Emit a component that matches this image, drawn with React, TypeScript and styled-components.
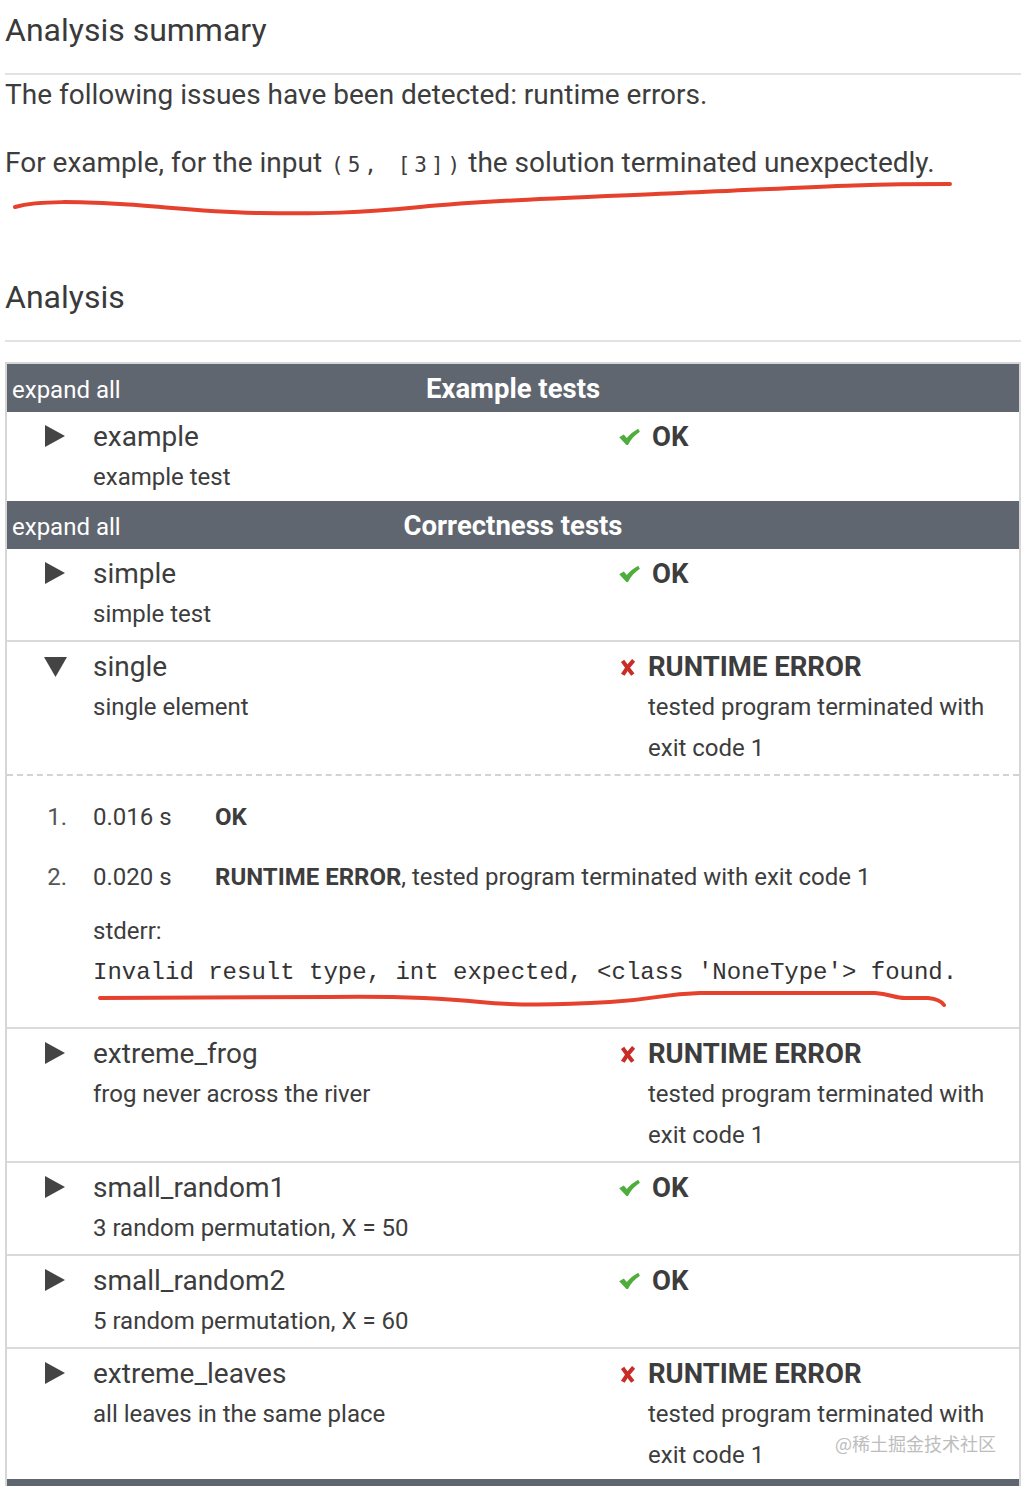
import React from 'react';
import styled, { createGlobalStyle } from 'styled-components';

const GlobalStyle = createGlobalStyle`
  body {
    margin: 0;
    background: #ffffff;
    color: #3d3d3d;
    font-family: Roboto, "Liberation Sans", sans-serif;
  }
`;

const Page = styled.div`
  position: relative;
  width: 1016px;
  padding: 0 7px 0 5px;
  height: 1486px;
  overflow: hidden;
`;

const Heading = styled.h2<{ top?: number }>`
  margin: 0;
  padding-top: ${({ top }) => top ?? 8}px;
  font-size: 32px;
  font-weight: 400;
  line-height: 44px;
  color: #3a3a3a;
`;

const Rule = styled.div<{ gap?: number }>`
  margin-top: ${({ gap }) => gap ?? 0}px;
  border-bottom: 2px solid #e2e2e2;
`;

const Para = styled.p<{ gap?: number }>`
  margin: ${({ gap }) => gap ?? 0}px 0 0;
  font-size: 28px;
  line-height: 40px;
`;

const Code = styled.code`
  font-family: "DejaVu Sans Mono", "Liberation Mono", monospace;
  font-size: 21px;
  letter-spacing: 4px;
  margin: 0 4px 0 9px;
`;

const Table = styled.div`
  margin-top: 20px;
  border: 2px solid #d6d6d6;
  border-bottom: none;
`;

const GroupHeader = styled.div`
  display: grid;
  grid-template-columns: 1fr auto 1fr;
  align-items: baseline;
  height: 48px;
  background: #5f666f;
  color: #ffffff;
`;

const ExpandAll = styled.span`
  padding-left: 5px;
  font-size: 24px;
  line-height: 52px;
`;

const GroupTitle = styled.span`
  font-size: 27.5px;
  font-weight: 700;
  line-height: 44px;
`;

const TestRow = styled.div<{ open?: boolean; last?: boolean }>`
  display: grid;
  grid-template-columns: 86px 524px 1fr;
  padding: 4px 0 ${({ last }) => (last ? 3 : 5)}px;
  border-bottom: ${({ open, last }) => (last ? 'none' : open ? '2px dashed #d3d3d3' : '2px solid #dadada')};
`;

const ToggleCell = styled.div`
  padding: 9px 0 0 37px;
`;

const NameCell = styled.div`
  display: flex;
  flex-direction: column;
`;

const Name = styled.span`
  font-size: 28px;
  line-height: 41px;
`;

const Desc = styled.span`
  font-size: 24px;
  line-height: 41px;
`;

const StatusCell = styled.div`
  display: flex;
  align-items: flex-start;
  padding-right: 8px;
`;

const StatusIcon = styled.span<{ ok?: boolean }>`
  flex: 0 0 ${({ ok }) => (ok ? 35 : 31)}px;
  padding: 13px 0 0 ${({ ok }) => (ok ? 2 : 3)}px;
  box-sizing: border-box;
  line-height: 0;
`;

const StatusText = styled.div`
  display: flex;
  flex-direction: column;
`;

const StatusTitle = styled.span`
  font-size: 27.5px;
  font-weight: 700;
  line-height: 41px;
`;

const StatusDetail = styled.span`
  font-size: 24px;
  line-height: 41px;
`;

const DetailPanel = styled.div`
  padding: 21px 0 34px;
  border-bottom: 2px solid #dadada;
`;

const RunLine = styled.div`
  display: grid;
  grid-template-columns: 86px 122px 1fr;
  font-size: 24px;
  line-height: 40px;
  margin-bottom: 20px;
`;

const RunNo = styled.span`
  text-align: right;
  padding-right: 26px;
  color: #555;
`;

const Strong = styled.b`
  font-weight: 700;
`;

const Stderr = styled.div`
  padding-left: 86px;
  margin-top: -6px;
  font-size: 24px;
  line-height: 41px;
`;

const Mono = styled.div`
  font-family: "Liberation Mono", "Courier New", monospace;
  font-size: 24px;
  line-height: 41px;
  color: #333;
`;

const Overlay = styled.svg`
  position: absolute;
  left: 0;
  top: 0;
  pointer-events: none;
`;

const Watermark = styled.span`
  position: absolute;
  left: 835px;
  top: 1430px;
  font-family: "Noto Sans CJK SC", sans-serif;
  font-size: 18px;
  color: #bdbdbd;
`;

type Test = {
  name: string;
  desc: string;
  ok: boolean;
  open?: boolean;
};

const groups: { title: string; tests: Test[] }[] = [
  { title: 'Example tests', tests: [{ name: 'example', desc: 'example test', ok: true }] },
  {
    title: 'Correctness tests',
    tests: [
      { name: 'simple', desc: 'simple test', ok: true },
      { name: 'single', desc: 'single element', ok: false, open: true },
      { name: 'extreme_frog', desc: 'frog never across the river', ok: false },
      { name: 'small_random1', desc: '3 random permutation, X = 50', ok: true },
      { name: 'small_random2', desc: '5 random permutation, X = 60', ok: true },
      { name: 'extreme_leaves', desc: 'all leaves in the same place', ok: false },
    ],
  },
  { title: 'Performance tests', tests: [] },
];

const Triangle = ({ open }: { open?: boolean }) =>
  open ? (
    <svg width="23" height="22" viewBox="0 0 23 22">
      <polygon points="0,2 23,2 11.5,22" fill="#444" />
    </svg>
  ) : (
    <svg width="22" height="22" viewBox="0 0 22 22">
      <polygon points="1,0 21,11 1,22" fill="#444" />
    </svg>
  );

const CheckIcon = () => (
  <svg width="21" height="16" viewBox="0 0 21 16">
    <path
      d="M0.2 8.2 L4.8 5.4 L7.8 9 C10.8 5.4, 14.6 2.2, 19.2 -0.2 L20.9 2.8 C15.8 6.2, 11.8 10.4, 9 16 L7.4 16 Z"
      fill="#4fae3b"
    />
  </svg>
);

const CrossIcon = () => (
  <svg width="16" height="17" viewBox="0 0 16 17">
    <path d="M2.6 1.8 C5.4 6, 9 10.6, 12.8 15.6" stroke="#c92d28" strokeWidth="4" fill="none" />
    <path d="M13.6 1.4 C9.6 5.6, 6 10.2, 2.8 15.8" stroke="#c92d28" strokeWidth="4.2" fill="none" />
  </svg>
);

const Row = ({ test, last }: { test: Test; last: boolean }) => (
  <>
    <TestRow open={test.open} last={last && !test.open}>
      <ToggleCell>
        <Triangle open={test.open} />
      </ToggleCell>
      <NameCell>
        <Name>{test.name}</Name>
        <Desc>{test.desc}</Desc>
      </NameCell>
      <StatusCell>
        <StatusIcon ok={test.ok}>{test.ok ? <CheckIcon /> : <CrossIcon />}</StatusIcon>
        <StatusText>
          <StatusTitle>{test.ok ? 'OK' : 'RUNTIME ERROR'}</StatusTitle>
          {!test.ok && <StatusDetail>tested program terminated with exit code 1</StatusDetail>}
        </StatusText>
      </StatusCell>
    </TestRow>
    {test.open && (
      <DetailPanel>
        <RunLine>
          <RunNo>1.</RunNo>
          <span>0.016 s</span>
          <Strong>OK</Strong>
        </RunLine>
        <RunLine>
          <RunNo>2.</RunNo>
          <span>0.020 s</span>
          <span>
            <Strong>RUNTIME ERROR</Strong>, tested program terminated with exit code 1
          </span>
        </RunLine>
        <Stderr>
          stderr:
          <Mono>Invalid result type, int expected, &lt;class 'NoneType'&gt; found.</Mono>
        </Stderr>
      </DetailPanel>
    )}
  </>
);

export default function App() {
  return (
    <Page>
      <GlobalStyle />
      <Heading>Analysis summary</Heading>
      <Rule gap={21} />
      <Para>The following issues have been detected: runtime errors.</Para>
      <Para gap={28}>
        For example, for the input<Code>(5, [3])</Code>the solution terminated unexpectedly.
      </Para>
      <Heading top={90}>Analysis</Heading>
      <Rule gap={21} />
      <Table>
        {groups.map((g) => (
          <React.Fragment key={g.title}>
            <GroupHeader>
              <ExpandAll>expand all</ExpandAll>
              <GroupTitle>{g.title}</GroupTitle>
              <span />
            </GroupHeader>
            {g.tests.map((t, i) => (
              <Row key={t.name} test={t} last={i === g.tests.length - 1} />
            ))}
          </React.Fragment>
        ))}
      </Table>
      <Overlay width="1028" height="1486" viewBox="0 0 1028 1486">
        <path
          d="M15 207 C 40 200, 80 202, 120 204 S 200 212, 260 213 S 360 213, 420 207 S 560 198, 680 193 S 850 184, 950 184"
          fill="none"
          stroke="#e5412c"
          strokeWidth="4"
          strokeLinecap="round"
        />
        <path
          d="M100 998 L 330 997 C 400 996, 440 998, 480 1002 S 560 1005, 610 1002 S 660 994, 700 993 L 875 993 C 890 994, 895 998, 905 998 L 928 998 C 938 999, 942 1002, 944 1005"
          fill="none"
          stroke="#e5412c"
          strokeWidth="4"
          strokeLinecap="round"
        />
      </Overlay>
      <Watermark>@稀土掘金技术社区</Watermark>
    </Page>
  );
}
